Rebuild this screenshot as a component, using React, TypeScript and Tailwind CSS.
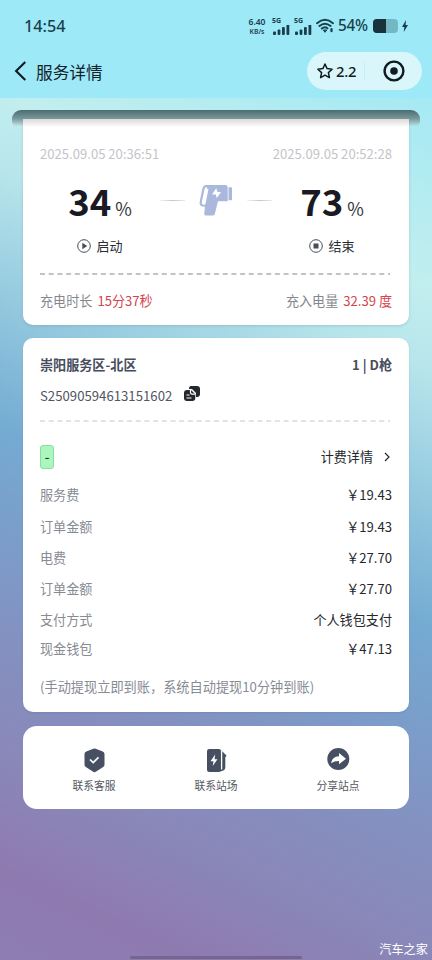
import type { ReactNode } from "react";

const chargeRows = [
  { label: "服务费", value: "￥19.43", height: "h-8" },
  { label: "订单金额", value: "￥19.43", height: "h-8" },
  { label: "电费", value: "￥27.70", height: "h-[29px]" },
  { label: "订单金额", value: "￥27.70", height: "h-[34px]" },
  { label: "支付方式", value: "个人钱包支付", height: "h-[28px]" },
  { label: "现金钱包", value: "￥47.13", height: "h-[30px]" },
];

function Signal() {
  return (
    <div className="flex h-[17px] w-[18px] flex-col">
      <span className="pb-px font-['Noto_Sans'] text-[7px] font-bold leading-[6px]">5G</span>
      <svg className="h-[10px] w-[18px]" viewBox="0 0 18 10" fill="currentColor">
        <rect x="1" y="6.5" width="3" height="3.5" rx="1" />
        <rect x="5.6" y="4.5" width="2.8" height="5.5" rx="1" />
        <rect x="10" y="2" width="2.8" height="8" rx="1" />
        <rect x="14.5" y="-1" width="2.8" height="11" rx="1" />
      </svg>
    </div>
  );
}

function StatusBar() {
  return (
    <div className="flex h-[52px] items-center pl-6 pr-[24px] text-[#183f4b]">
      <span className="font-['Noto_Sans'] text-[16.2px] font-medium">14:54</span>
      <div className="ml-auto flex items-center">
        <div className="mr-[5px] flex w-[20px] flex-col items-center whitespace-nowrap font-['Noto_Sans'] font-semibold">
          <span className="text-[8.5px] leading-[8px]">6.40</span>
          <span className="pt-[2px] text-[6.8px] leading-[7px]">KB/s</span>
        </div>
        <div className="flex gap-[4px]">
          <Signal />
          <Signal />
        </div>
        <svg className="ml-[4px] h-[16px] w-[18px]" viewBox="0 0 18 16" fill="none" stroke="currentColor" strokeWidth="1.9" strokeLinecap="round">
          <path d="M1 5.2Q9-1.6 17 5.2M3.4 8Q9 3.3 14.6 8M5.8 10.6Q9 8 11.5 10.4" />
          <path d="m7.5 12.3 1.5 2 1.5-2Z" fill="currentColor" strokeWidth="1" />
          <path d="M15.5 11.2v2" strokeWidth="2.2" />
        </svg>
        <span className="ml-[4px] w-[31px] font-['Noto_Sans'] text-[15.3px] font-medium leading-none tracking-[-0.2px]">54%</span>
        <div className="ml-[4px] flex h-[14px] w-[25px] overflow-hidden rounded-[4px] bg-[#73b7c3]">
          <div className="w-[13px] bg-[#19333d]" />
        </div>
        <svg className="ml-[4px] h-[12px] w-[6px]" viewBox="0 0 6 12" fill="currentColor">
          <path d="M4 0 0 7h2.3L1.7 12 6 5H3.6Z" />
        </svg>
      </div>
    </div>
  );
}

function NavBar() {
  return (
    <div className="flex h-[46px] items-start pl-[14px] pr-[10px]">
      <svg className="mt-[9px] h-[20px] w-[12px]" viewBox="0 0 12 20" fill="none" stroke="#101820" strokeWidth="2.1">
        <path d="m11.3 1-9.2 9 9.2 9" />
      </svg>
      <h1 className="ml-[10px] mt-[8px] text-[16.7px] leading-6 text-[#15222a]">服务详情</h1>
      <div className="ml-auto flex h-[38px] w-[115px] items-center rounded-full bg-[#d9f6fb] pl-[10px] text-[#111b20]">
        <svg className="h-4 w-4" viewBox="0 0 16 16" fill="none" stroke="currentColor" strokeWidth="1.5" strokeLinejoin="round">
          <path d="m8 1 2.1 4.6 5 .6-3.7 3.4 1 5L8 12.1l-4.4 2.5 1-5L.9 6.2l5-.6Z" />
        </svg>
        <span className="ml-[3px] font-['Noto_Sans'] text-[14.8px] font-medium leading-none tracking-[-0.2px]">2.2</span>
        <div className="ml-[8px] h-5 w-px bg-[#c9eef3]" />
        <svg className="ml-[18px] h-[22px] w-[22px]" viewBox="0 0 22 22" fill="none" stroke="currentColor" strokeWidth="2.4">
          <circle cx="11" cy="11" r="9.4" />
          <circle cx="11" cy="11" r="3.8" fill="currentColor" stroke="none" />
        </svg>
      </div>
    </div>
  );
}

function ChargeLevel({ value, label, end = false }: { value: number; label: string; end?: boolean }) {
  return (
    <div className="flex w-[120px] flex-col items-center">
      <div className="flex items-baseline leading-none">
        <span className="text-[36.5px] font-bold leading-[43px] text-[#191a24]">{value}</span>
        <span className="ml-[4px] text-[18px] text-[#34363d]">%</span>
      </div>
      <div className="mt-[14px] flex items-center gap-[5px] text-[13px] leading-5 text-[#292c33]">
        <svg className="h-[14px] w-[14px]" viewBox="0 0 14 14" fill="none" stroke="#484d56">
          <circle cx="7" cy="7" r="6.3" />
          {end ? <rect x="4.5" y="4.5" width="5" height="5" fill="#484d56" stroke="none" /> : <path d="m5.3 3.8 4.9 3.2-4.9 3.2Z" fill="#484d56" stroke="none" />}
        </svg>
        <span>{label}</span>
      </div>
    </div>
  );
}

function Dash({ light = false }: { light?: boolean }) {
  return (
    <svg className="block h-[2px] w-[350px]" viewBox="0 0 350 2">
      <path d="M0 1H350" stroke={light ? "#c6c6c8" : "#b0b0b0"} strokeWidth={light ? 1 : 1.3} strokeDasharray="5 3.7" />
    </svg>
  );
}

function ChargerGun() {
  return (
    <svg className="h-[32px] w-[34px]" viewBox="0 0 34 32">
      <path d="M8 1h18.5q2.2 0 2.2 2.2v14H19L15.8 30q-.4 1.6-2 1.6H7q-2 0-1.8-2.2L6.2 21Z" fill="#aab8db" />
      <path d="M9 2H7.5Q5 2 4.5 4.5L1.8 17.7q-.7 3.4 2 3.8l4 .4" fill="none" stroke="#aab8db" strokeWidth="2.2" />
      <path d="M6.3 4.7h3.2L6.8 18.6q-.2 1-1.4 1-2.6 0-2.1-1.8Z" fill="white" />
      <path d="M17.2 4.2 13 10.4h3.7L17.9 14l4.2-6.1h-3.6Z" fill="white" />
      <rect x="29.5" y="3.2" width="3.5" height="13" rx=".6" fill="#aab8db" />
    </svg>
  );
}

function FadeLine() {
  return <div className="mt-[1px] h-px w-[25px] bg-linear-to-r from-[#f3f3f3] via-[#c8c8c8] to-[#e9e9e9]" />;
}

function CopyIcon() {
  return (
    <svg className="h-4 w-4" viewBox="0 0 16 16">
      <path d="M7 0h6q3 0 3 3v5q0 3-3 3h-1V7L8 3H5q0-3 2-3Z" fill="#24272c" />
      <path d="M3 4h4l4.3 4.3V12q0 3-3 3H3q-3 0-3-3V7q0-3 3-3Z" fill="#24272c" />
      <path d="M6.5 3.5v3q0 1.7 1.7 1.7h3M2.5 9h3M2.5 12h5" fill="none" stroke="white" strokeWidth="1.2" />
    </svg>
  );
}

function Action({ icon, label }: { icon: ReactNode; label: string }) {
  return (
    <button className="flex w-[122px] flex-col items-center text-[10.8px] leading-4 text-[#55585d]">
      {icon}
      <span className="mt-[4px]">{label}</span>
    </button>
  );
}

export default function App() {
  return (
    <main className="relative h-[960px] w-[432px] overflow-hidden bg-[linear-gradient(205deg,#a0e8f7_0%,#a9eaf3_11%,#c2eeee_25%,#b7e5eb_32%,#94c9df_43%,#74abd2_54%,#7b9dca_63%,#8490c0_73%,#8988b9_82%,#8f7ab0_92%,#8d7db2_100%)] font-['Noto_Sans_CJK_SC','Noto_Sans',sans-serif]">
      <header className="relative bg-[#9de9f8]">
        <StatusBar />
        <NavBar />
      </header>
      <div className="relative px-[23px] pt-[12px]">
        <div className="relative -mx-[11px] h-[17px] rounded-t-[9px] rounded-b-[6px] bg-linear-to-b from-[#4b6c70] via-[#78979b] to-white/20" />
        <section className="relative -mt-[8px] h-[206px] rounded-b-[10px] bg-white bg-linear-to-b from-[#ded9d8] via-white via-[4%] to-white px-[17px] pt-[26px] shadow-[0_1px_3px_#6894a055]">
          <div className="flex justify-between text-[13.1px] leading-[18px] text-[#c3c4c8]">
            <span>2025.09.05 20:36:51</span>
            <span>2025.09.05 20:52:28</span>
          </div>
          <div className="mt-[16px] flex justify-between">
            <ChargeLevel value={34} label="启动" />
            <div className="flex h-[44px] items-center gap-[14px] pb-[3px]">
              <FadeLine />
              <ChargerGun />
              <FadeLine />
            </div>
            <ChargeLevel value={73} label="结束" end />
          </div>
          <div className="mt-[17px]"><Dash /></div>
          <div className="mt-[16px] flex justify-between text-[13.1px] leading-5 text-[#85878d]">
            <span>充电时长<b className="ml-[5px] font-normal text-[#d5434d]">15分37秒</b></span>
            <span>充入电量<b className="ml-[5px] font-normal text-[#d5434d]">32.39 度</b></span>
          </div>
        </section>

        <section className="mt-[13px] h-[374px] rounded-[10px] bg-white px-[17px] pt-[17px] shadow-[0_1px_2px_#47628a33]">
          <div className="flex justify-between text-[13.1px] font-bold leading-5 text-[#474d5c]">
            <span>崇阳服务区-北区</span>
            <span>1 | D枪</span>
          </div>
          <div className="mt-[11px] flex items-center text-[13.2px] leading-5 text-[#51565f]">
            <span>S25090594613151602</span>
            <span className="-mt-[4px] ml-[12px]"><CopyIcon /></span>
          </div>
          <div className="mt-[14px]"><Dash light /></div>
          <div className="mt-[22px] flex h-[26px] items-center justify-between text-[13.1px] text-[#24272e]">
            <span className="flex h-[24px] w-[14px] items-center justify-center rounded-[3px] border border-[#8edba4] bg-[#aaf7bd] font-medium leading-none">-</span>
            <span className="flex items-center gap-[11px]">计费详情
              <svg className="mr-[2px] h-[10px] w-[6px]" viewBox="0 0 6 10" fill="none" stroke="currentColor" strokeWidth="1.2"><path d="m1 1 4 4-4 4" /></svg>
            </span>
          </div>
          <div className="mt-[9px] text-[13.1px] text-[#878b93]">
            {chargeRows.map((row, i) => (
              <div key={i} className={`flex items-center justify-between ${row.height}`}>
                <span>{row.label}</span>
                <span className="text-[#24272e]">{row.value}</span>
              </div>
            ))}
          </div>
          <p className="mt-[13px] whitespace-nowrap text-[13.2px] leading-5 text-[#878b93]">(手动提现立即到账，系统自动提现10分钟到账)</p>
        </section>

        <section className="mt-[14px] flex h-[83px] justify-center rounded-[14px] bg-white pt-[22px]">
          <Action label="联系客服" icon={
            <svg className="h-[25px] w-[21px]" viewBox="0 0 21 25"><path d="M9.3.8q1.2-.5 2.4 0l7 2.7q1.8.7 1.8 2.5v10.7q0 1.5-1.3 2.4l-7 4.5q-1.7 1.1-3.4 0l-7-4.5Q.5 18.2.5 16.7V6q0-1.8 1.8-2.5Z" fill="#475063" /><path d="m6 11.5 3.2 3.1 5.3-5.3" fill="none" stroke="white" strokeWidth="1.7" /></svg>
          } />
          <Action label="联系站场" icon={
            <svg className="h-[25px] w-[21px]" viewBox="0 0 21 25">
              <path d="M15.5 2.5 20.5 7.5 19.3 9.5V19q0 4-4.3 4.2H12V2.5Z" fill="#475063" />
              <rect x="1" y="1" width="14" height="23" rx="2.2" fill="#475063" />
              <path d="M15.6 2.5V21.5" stroke="white" strokeWidth="1.3" />
              <path d="m9.2 6.5-4.7 6.8h3L6.7 18l4.8-6.8H8.6Z" fill="white" />
            </svg>
          } />
          <Action label="分享站点" icon={
            <svg className="h-[25px] w-[23px]" viewBox="0 0 23 25"><circle cx="11.3" cy="11" r="11" fill="#475063" /><path d="M12 5 19 10.7 12 16.2v-3.1q-5 0-8 2.2Q5 8.6 12 8.3Z" fill="white" /></svg>
          } />
        </section>
      </div>
      <div className="absolute bottom-[1px] left-[130px] h-[3px] w-[172px] rounded-full bg-[#75668f]" />
      <span className="absolute bottom-[2px] right-[4px] text-[12.2px] leading-[18px] text-white">汽车之家</span>
    </main>
  );
}
